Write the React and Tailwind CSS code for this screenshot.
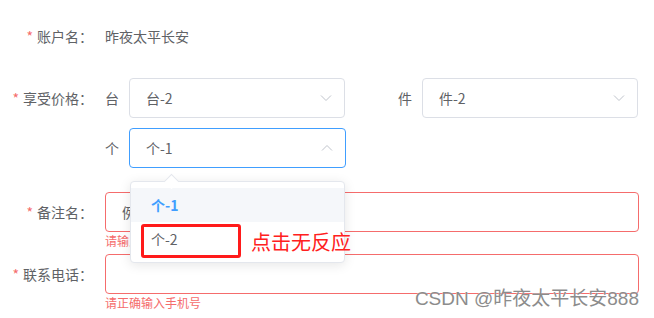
import { useState } from 'react';

function Chevron({ up }) {
  return (
    <svg width="12" height="12" viewBox="0 0 12 12" className="shrink-0">
      <polyline
        points={up ? '1,8.5 6,3.5 11,8.5' : '1,3.5 6,8.5 11,3.5'}
        fill="none"
        stroke="#c0c4cc"
        strokeWidth="1"
      />
    </svg>
  );
}

function Select({ value, open }) {
  return (
    <div
      className={`h-10 w-[217px] flex items-center justify-between pl-4 pr-3 rounded border bg-white ${
        open ? 'border-[#409eff]' : 'border-[#dcdfe6]'
      }`}
    >
      <span className="text-[#606266]">{value}</span>
      <Chevron up={open} />
    </div>
  );
}

function Label({ children, className = '' }) {
  return (
    <div className={`w-[105px] shrink-0 pr-3 flex items-center justify-end text-[#606266] ${className}`}>
      <span className="text-[#f56c6c] mr-1">*</span>
      {children}
    </div>
  );
}

function Dropdown() {
  const options = ['个-1', '个-2'];
  const [picked] = useState('个-1');

  return (
    <div className="absolute left-px top-[53px] w-[215px] z-10 bg-white border border-[#e4e7ed] rounded shadow-[0_2px_12px_rgba(0,0,0,0.1)] py-[6px]">
      <div className="absolute -top-[6px] left-[35px] w-[11px] h-[11px] rotate-45 bg-white border-t border-l border-[#e4e7ed]" />
      {options.map((o) => (
        <div
          key={o}
          className={`h-[34px] flex items-center pl-5 ${
            o === picked ? 'bg-[#f5f7fa] text-[#409eff] font-bold' : 'text-[#606266]'
          }`}
        >
          {o}
        </div>
      ))}

      {/* annotation */}
      <div className="absolute left-[10px] top-[42px] w-[100px] h-[34px] border-[3px] border-[#ff1a1a] rounded-[3px]" />
      <div className="absolute left-[120px] top-[48px] text-[20px] leading-6 text-[#ff2020] whitespace-nowrap">
        点击无反应
      </div>
    </div>
  );
}

export default function App() {
  return (
    <div className="relative w-[654px] h-[318px] overflow-hidden bg-white text-sm font-['Microsoft_YaHei','Noto_Sans_CJK_SC',sans-serif]">
      <div className="pt-4 flex flex-col">
        <div className="flex h-10 items-center">
          <Label>账户名：</Label>
          <span className="text-[#606266]">昨夜太平长安</span>
        </div>

        <div className="flex mt-[22px]">
          <Label className="h-10 self-start">享受价格：</Label>
          <div className="grid grid-cols-[240px_240px] gap-x-[53px] gap-y-[10px]">
            <div className="flex items-center gap-[10px]">
              <span className="w-[14px] text-[#606266]">台</span>
              <Select value="台-2" />
            </div>
            <div className="flex items-center gap-[10px]">
              <span className="w-[14px] text-[#606266]">件</span>
              <Select value="件-2" />
            </div>
            <div className="flex items-center gap-[10px]">
              <span className="w-[14px] text-[#606266]">个</span>
              <div className="relative">
                <Select value="个-1" open />
                <Dropdown />
              </div>
            </div>
          </div>
        </div>

        <div className="flex mt-6">
          <Label className="h-10 self-start">备注名：</Label>
          <div className="flex-1 mr-[15px]">
            <div className="h-10 flex items-center pl-4 border border-[#f56c6c] rounded text-[#606266]">
              例如：张三
            </div>
            <div className="h-[22px] pt-px text-xs leading-4 text-[#f56c6c]">请输入备注名</div>
          </div>
        </div>

        <div className="flex">
          <Label className="h-10 self-start">联系电话：</Label>
          <div className="flex-1 mr-[15px]">
            <div className="h-10 border border-[#f56c6c] rounded" />
            <div className="h-[22px] pt-px text-xs leading-4 text-[#f56c6c]">请正确输入手机号</div>
          </div>
        </div>
      </div>

      <div className="absolute right-[15px] top-[288px] text-[19px] leading-[22px] text-[#8c8c8c] [text-shadow:0_0_1px_#fff] font-['Liberation_Sans','Noto_Sans_CJK_SC',sans-serif]">
        CSDN @昨夜太平长安888
      </div>
    </div>
  );
}
